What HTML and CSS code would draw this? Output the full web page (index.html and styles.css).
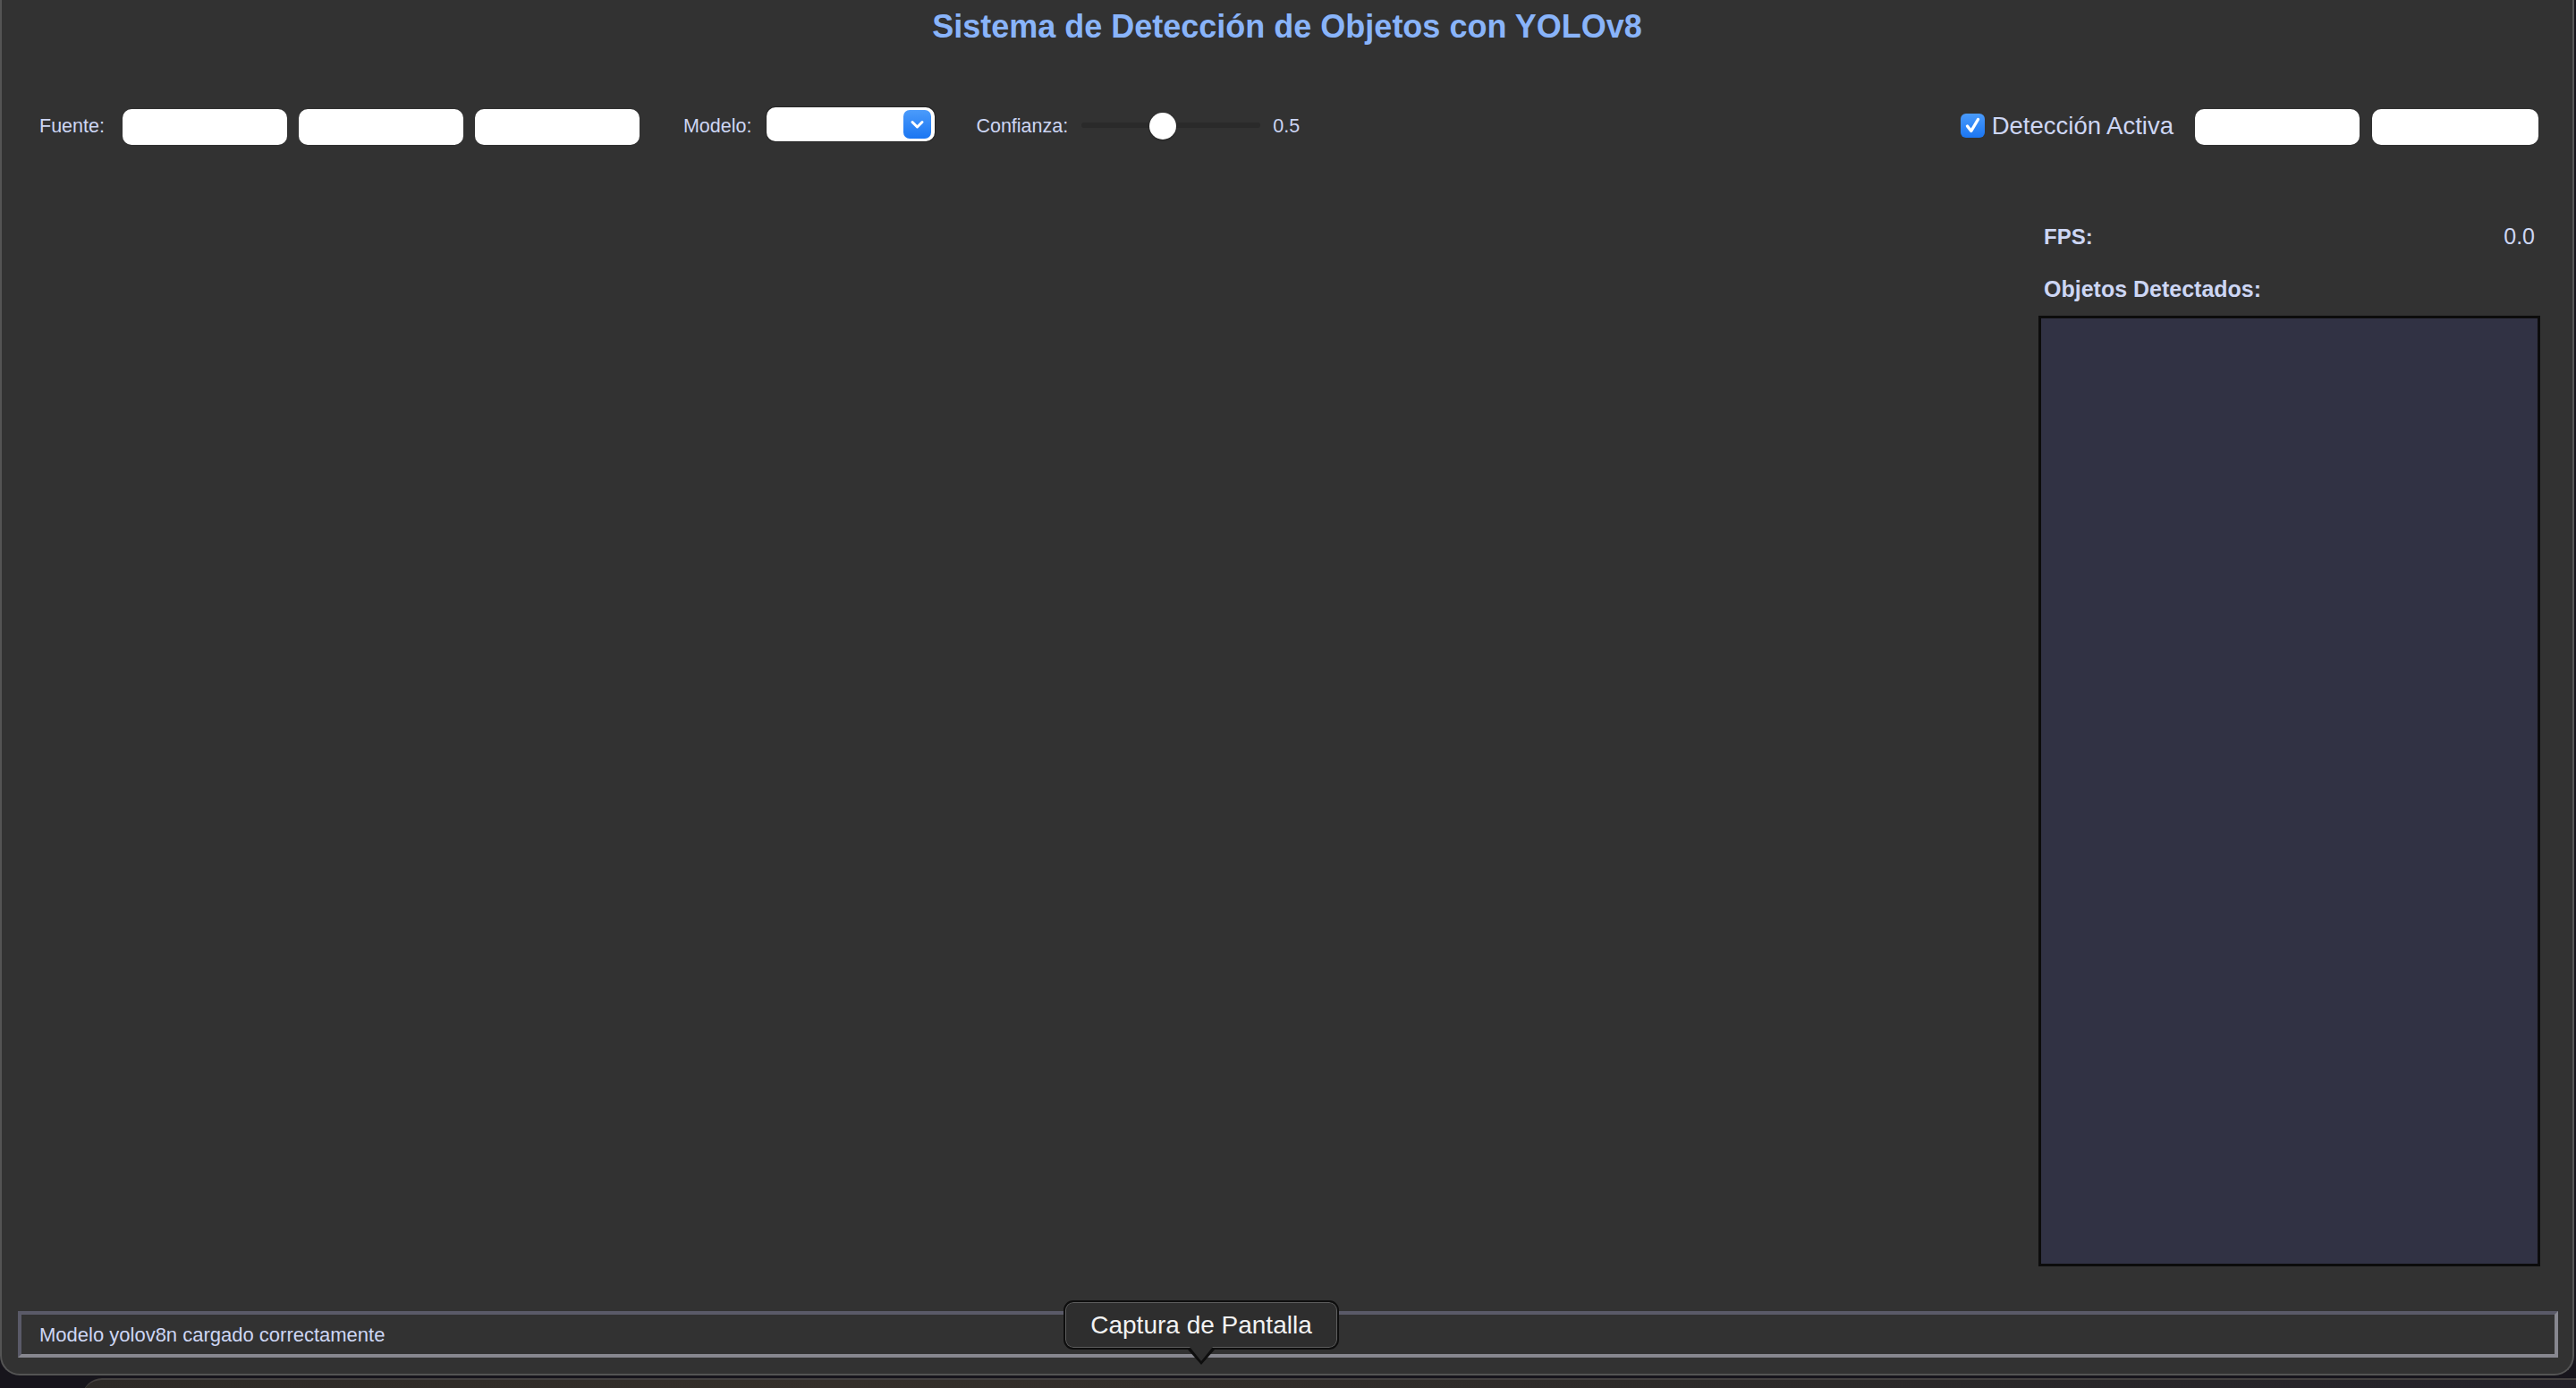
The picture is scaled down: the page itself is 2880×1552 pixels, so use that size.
FILE: index.html
```html
<!DOCTYPE html>
<html lang="es">
<head>
<meta charset="utf-8">
<title>Sistema de Detección de Objetos con YOLOv8</title>
<link rel="stylesheet" href="styles.css">
</head>
<body>
<div class="window">
  <h1 class="title">Sistema de Detección de Objetos con YOLOv8</h1>

  <div class="toolbar">
    <div class="group">
      <div class="ctrl ctrl-source">
        <span class="lbl">Fuente:</span>
        <div class="btns">
          <button class="btn"></button>
          <button class="btn"></button>
          <button class="btn"></button>
        </div>
      </div>
      <div class="ctrl ctrl-model">
        <span class="lbl">Modelo:</span>
        <div class="combo">
          <span class="combo-arrow">
            <svg width="31" height="32" viewBox="0 0 31 32"><path d="M10 13.5 L15.5 19 L21 13.5" fill="none" stroke="#fff" stroke-width="3" stroke-linecap="round" stroke-linejoin="round"/></svg>
          </span>
        </div>
      </div>
      <div class="ctrl ctrl-conf">
        <span class="lbl">Confianza:</span>
        <div class="slider"><span class="track"></span><span class="knob"></span></div>
        <span class="lbl value">0.5</span>
      </div>
    </div>

    <div class="group">
      <label class="check">
        <span class="box">
          <svg width="27" height="27" viewBox="0 0 27 27"><path d="M7.5 14 L11.8 19.5 L19.5 6.5" fill="none" stroke="#fff" stroke-width="3.4" stroke-linecap="round" stroke-linejoin="round"/></svg>
        </span>
        <span class="check-text">Detección Activa</span>
      </label>
      <div class="btns btns-right">
        <button class="btn"></button>
        <button class="btn btn-wide"></button>
      </div>
    </div>
  </div>

  <div class="main">
    <div class="video"></div>
    <aside class="panel">
      <div class="stat-row">
        <span class="stat-lbl">FPS:</span>
        <span class="stat-val">0.0</span>
      </div>
      <div class="stat-lbl objs">Objetos Detectados:</div>
      <div class="listbox"></div>
    </aside>
  </div>

  <div class="status">Modelo yolov8n cargado correctamente</div>
</div>

<div class="tooltip">Captura de Pantalla</div>
<div class="behind"></div>
</body>
</html>
```

FILE: styles.css
```css
html, body {
  margin: 0;
  padding: 0;
}

body {
  width: 2880px;
  height: 1552px;
  overflow: hidden;
  position: relative;
  background: #17151c;
  font-family: "Liberation Sans", Arial, sans-serif;
}

.window {
  position: relative;
  z-index: 2;
  width: 2878px;
  height: 1538px;
  box-sizing: border-box;
  background: #323232;
  border: 2px solid #545454;
  border-top: none;
  border-radius: 0 0 22px 22px;
  display: flex;
  flex-direction: column;
}

.title {
  margin: 9px 0 0;
  font-size: 36px;
  line-height: 41px;
  font-weight: 700;
  color: #89b4fa;
  text-align: center;
}

.toolbar {
  display: flex;
  align-items: center;
  justify-content: space-between;
  height: 44px;
  margin-top: 70px;
  padding: 0 38px 0 42px;
}

.group {
  display: flex;
  align-items: center;
}

.ctrl {
  display: flex;
  align-items: center;
}

.lbl {
  font-size: 21.5px;
  color: #cdd6f4;
  white-space: nowrap;
  margin-top: -2px;
}

.ctrl-source .lbl { margin-right: 20px; }

.btns {
  display: flex;
  gap: 13px;
}

.btn {
  width: 184px;
  height: 40px;
  border: none;
  border-radius: 10px;
  background: #ffffff;
  padding: 0;
}

.btn-wide { width: 186px; }

.ctrl-model { margin-left: 49px; }
.ctrl-model .lbl { margin-right: 17px; }

.combo {
  width: 188px;
  height: 38px;
  margin-bottom: 6px;
  box-sizing: border-box;
  background: #ffffff;
  border-radius: 10px;
  display: flex;
  align-items: center;
  justify-content: flex-end;
  padding-right: 4px;
  box-shadow: 0 0 0 1px rgba(0,0,0,0.25);
}

.combo-arrow {
  width: 31px;
  height: 32px;
  border-radius: 7px;
  background: linear-gradient(#4b9bfb, #1b76f2);
  display: flex;
}

.ctrl-conf { margin-left: 46px; }
.ctrl-conf .lbl { margin-right: 15px; }
.ctrl-conf .value { margin-left: 14px; margin-right: 0; }

.slider {
  position: relative;
  width: 200px;
  height: 32px;
  display: flex;
  align-items: center;
}

.track {
  width: 100%;
  height: 6px;
  border-radius: 3px;
  background: #2a2a2a;
  margin-top: -4px;
}

.knob {
  position: absolute;
  left: 76px;
  top: 0;
  width: 30px;
  height: 30px;
  border-radius: 50%;
  background: #ffffff;
  box-shadow: 0 1px 2px rgba(0,0,0,0.35);
}

.check {
  display: flex;
  align-items: center;
  margin-right: 24px;
}

.box {
  width: 27px;
  height: 27px;
  border-radius: 6px;
  background: linear-gradient(#4a9bfb, #1b76f2);
  display: flex;
  margin: -4px 8px 0 -3px;
}

.check-text {
  font-size: 27.5px;
  color: #cdd6f4;
  white-space: nowrap;
  margin-top: -3px;
}

.btns-right { gap: 14px; }

.main {
  flex: 1;
  display: flex;
  min-height: 0;
}

.video {
  flex: 1;
}

.panel {
  width: 561px;
  margin: 86px 36px 50px 0;
  display: flex;
  flex-direction: column;
}

.stat-row {
  display: flex;
  justify-content: space-between;
  padding: 0 6px;
  height: 29px;
  line-height: 29px;
}

.stat-lbl {
  font-size: 24px;
  font-weight: 700;
  color: #cdd6f4;
}

.stat-val {
  font-size: 25px;
  color: #cdd6f4;
}

.objs {
  margin-top: 30px;
  padding-left: 6px;
  line-height: 29px;
  font-size: 25px;
}

.listbox {
  flex: 1;
  margin-top: 15px;
  background: #313244;
  border: 3px solid #0c0c0c;
}

.status {
  height: 52px;
  margin: 0 16px 18px 18px;
  box-sizing: border-box;
  border: 4px solid;
  border-color: #5a5a68 #87878f #87878f #5a5a68;
  padding-left: 20px;
  font-size: 22px;
  line-height: 46px;
  color: #cdd6f4;
}

.tooltip {
  position: absolute;
  z-index: 5;
  left: 1189px;
  top: 1454px;
  width: 308px;
  height: 55px;
  box-sizing: border-box;
  background: #2e2e2e;
  border: 2px solid #0e0e0e;
  border-radius: 11px;
  box-shadow: inset 0 0 0 1px #5e5e5e;
  color: #f2f2f2;
  font-size: 28px;
  line-height: 51px;
  text-align: center;
}

.tooltip::before,
.tooltip::after {
  content: "";
  position: absolute;
  left: 50%;
  width: 0;
  height: 0;
  border-style: solid;
  border-color: transparent;
}

.tooltip::before {
  top: 53px;
  margin-left: -15px;
  border-width: 17px 15px 0 15px;
  border-top-color: #0e0e0e;
}

.tooltip::after {
  top: 50px;
  margin-left: -13px;
  border-width: 16px 13px 0 13px;
  border-top-color: #2e2e2e;
}

.behind {
  position: absolute;
  z-index: 1;
  left: 92px;
  top: 1541px;
  width: 2800px;
  height: 30px;
  background: linear-gradient(90deg, #2d2a27, #35302b 30%, #2c2a2a 70%, #24222a);
  border-top: 2px solid #444140;
  border-radius: 22px 0 0 0;
}
```
